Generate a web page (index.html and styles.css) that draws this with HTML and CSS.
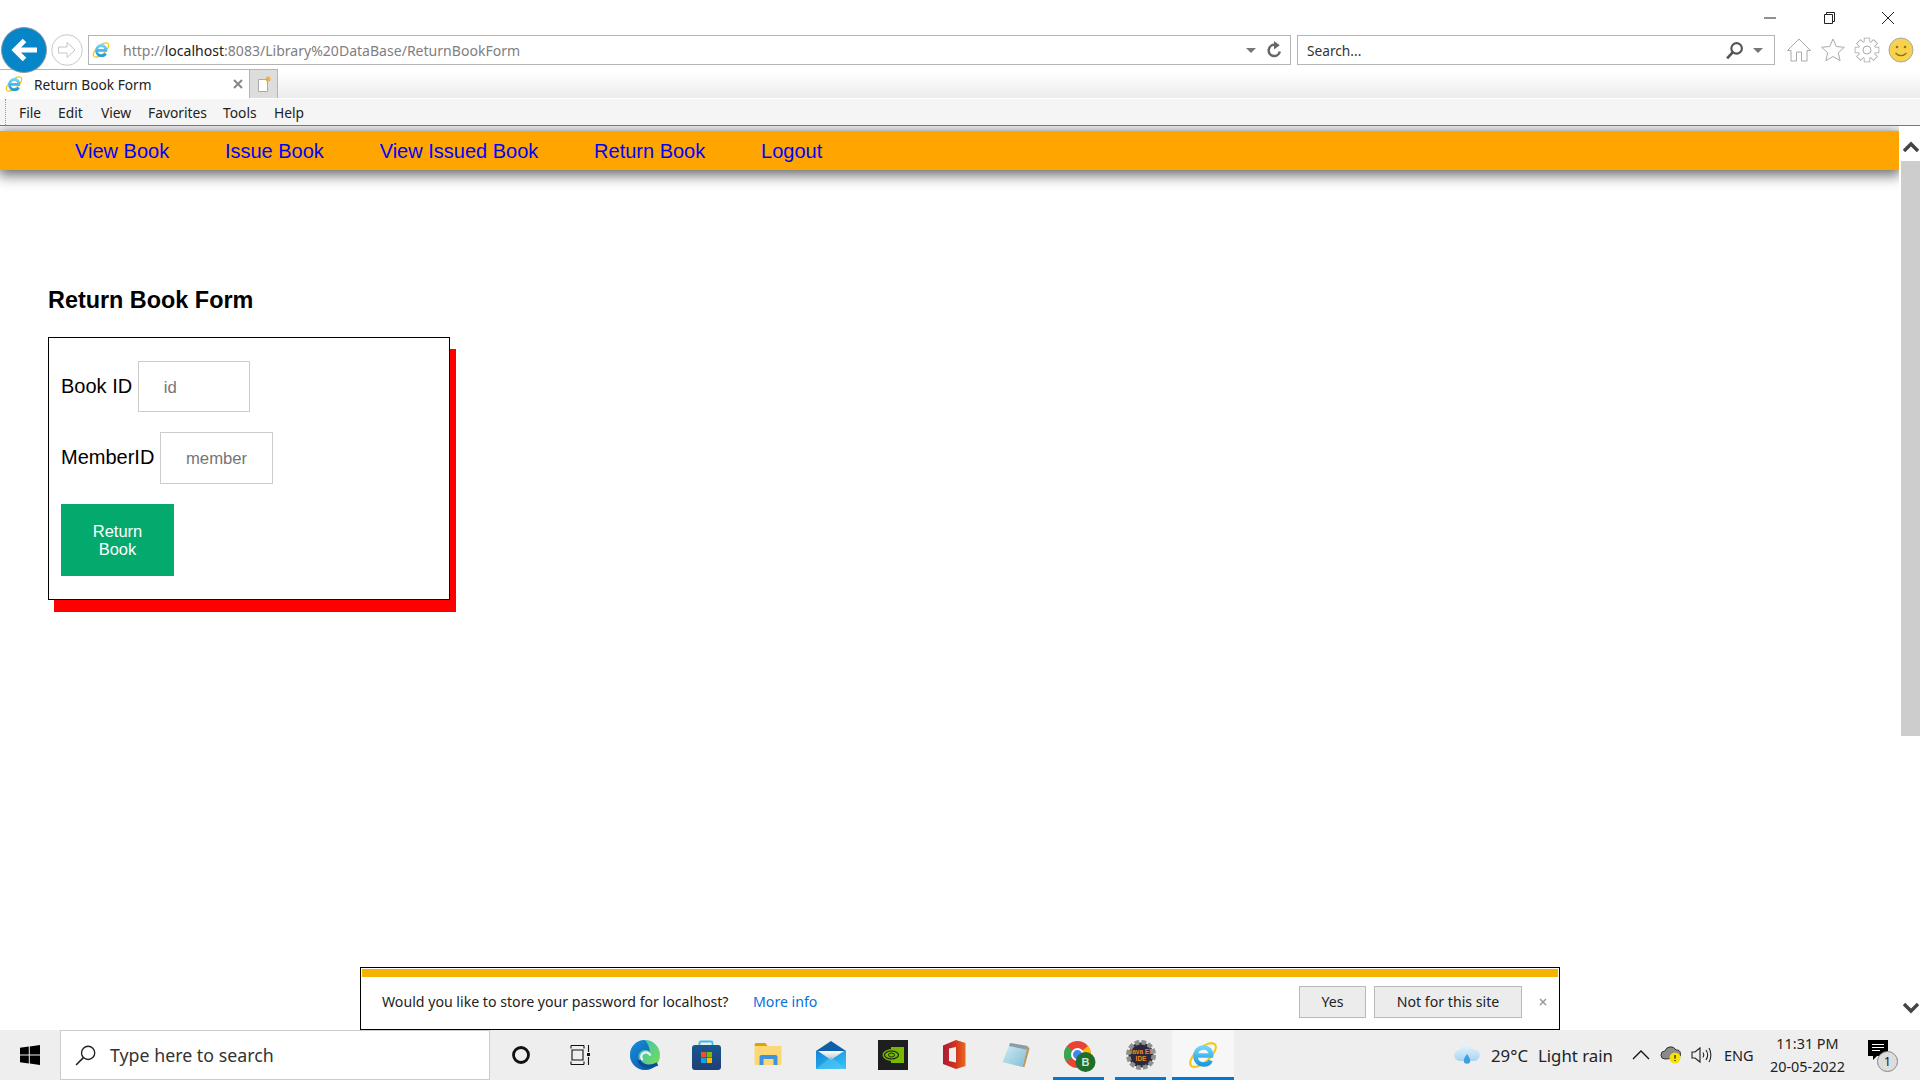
FILE: index.html
```html
<!DOCTYPE html>
<html lang="en">
<head>
<meta charset="utf-8">
<title>Return Book Form</title>
<link rel="stylesheet" href="styles.css">
</head>
<body>
<svg class="defs" width="0" height="0" aria-hidden="true">
  <defs>
    <linearGradient id="ieBlue" x1="0" y1="0" x2="0" y2="1"><stop offset="0" stop-color="#6fd3f7"/><stop offset="1" stop-color="#1d9be0"/></linearGradient>
    <linearGradient id="edgeTop" x1="0" y1="0" x2="1" y2="0.7"><stop offset="0" stop-color="#2cb8d8"/><stop offset="1" stop-color="#74dc5c"/></linearGradient>
    <linearGradient id="edgeLow" x1="0" y1="0" x2="1" y2="1"><stop offset="0" stop-color="#1a8fe0"/><stop offset="1" stop-color="#0b4f9c"/></linearGradient>
    <linearGradient id="mailG" x1="0" y1="0" x2="1" y2="1"><stop offset="0" stop-color="#0f84d8"/><stop offset="1" stop-color="#38c6f5"/></linearGradient>
    <linearGradient id="letterG" x1="0" y1="0" x2="0" y2="1"><stop offset="0" stop-color="#fff"/><stop offset="1" stop-color="#b8c0c8"/></linearGradient>
    <linearGradient id="officeG" x1="0" y1="0" x2="1" y2="0"><stop offset="0" stop-color="#a81c3a"/><stop offset=".55" stop-color="#d2321e"/><stop offset="1" stop-color="#ea6a1e"/></linearGradient>
    <linearGradient id="padG" x1="0" y1="0" x2="1" y2="1"><stop offset="0" stop-color="#d5eef5"/><stop offset="1" stop-color="#7dbcd6"/></linearGradient>
    <linearGradient id="storeG" x1="0" y1="0" x2="0" y2="1"><stop offset="0" stop-color="#18588f"/><stop offset="1" stop-color="#1f3f78"/></linearGradient>
    <linearGradient id="cloudG" x1="0" y1="0" x2="0" y2="1"><stop offset="0" stop-color="#e6f3fc"/><stop offset="1" stop-color="#a9d4f1"/></linearGradient>
    <symbol id="ie" viewBox="0 0 30 30">
      <ellipse cx="15" cy="15" rx="16" ry="7" transform="rotate(-42 15 15)" fill="none" stroke="#f6c81e" stroke-width="2.200"/>
      <path d="M8 15.500h15c.2-5-3-8-7.300-8C11 7.500 7.500 11 7.500 16c0 5 3.500 8.500 8.200 8.500 3.400 0 5.800-1.500 7-4" fill="none" stroke="url(#ieBlue)" stroke-width="4.600"/>
    </symbol>
    <g id="gearTeeth">
      <circle cx="13" cy="13" r="8.200"/>
      <rect x="10.600" y="1.500" width="4.800" height="5"/>
      <rect x="10.600" y="1.500" width="4.800" height="5" transform="rotate(45 13 13)"/>
      <rect x="10.600" y="1.500" width="4.800" height="5" transform="rotate(90 13 13)"/>
      <rect x="10.600" y="1.500" width="4.800" height="5" transform="rotate(135 13 13)"/>
      <rect x="10.600" y="1.500" width="4.800" height="5" transform="rotate(180 13 13)"/>
      <rect x="10.600" y="1.500" width="4.800" height="5" transform="rotate(225 13 13)"/>
      <rect x="10.600" y="1.500" width="4.800" height="5" transform="rotate(270 13 13)"/>
      <rect x="10.600" y="1.500" width="4.800" height="5" transform="rotate(315 13 13)"/>
    </g>
  </defs>
</svg>

<div class="window">
  <div class="titlebar">
    <svg class="winctl" viewBox="0 0 14 14"><path d="M1 7h12" stroke="#222" fill="none"/></svg>
    <svg class="winctl" viewBox="0 0 14 14"><path d="M2.500 3.500h8v9h-8zM4.500 3.500v-2h8v9h-2" stroke="#222" fill="none"/></svg>
    <svg class="winctl" viewBox="0 0 14 14"><path d="M1 1l12 12M13 1L1 13" stroke="#222" fill="none"/></svg>
  </div>

  <div class="addressrow">
    <div class="backbtn">
      <svg viewBox="0 0 46 46"><circle cx="23" cy="23" r="22.500" fill="#0785c9" stroke="#8d9aa3"/><path d="M36 23H14M23.500 13.500L14 23l9.500 9.500" fill="none" stroke="#fff" stroke-width="5"/></svg>
    </div>
    <div class="fwdbtn">
      <svg viewBox="0 0 32 32"><circle cx="16" cy="16" r="15.300" fill="#fff" stroke="#c9c9c9"/><path d="M7.500 13h8.500V8.500L24 16l-8 7.500V19H7.500z" fill="none" stroke="#c4c4c4"/></svg>
    </div>
    <div class="addressbox">
      <svg class="icon16" viewBox="0 0 30 30"><use href="#ie"/></svg>
      <span class="url">http://<b>localhost</b>:8083/Library%20DataBase/ReturnBookForm</span>
      <span class="drop"></span>
      <svg class="refresh" viewBox="0 0 18 18"><path d="M14 10a5.300 5.300 0 1 1-4.500-6.300" fill="none" stroke="#666" stroke-width="2.400"/><path d="M8.500 0l5.500 4-5.500 4z" fill="#666"/></svg>
    </div>
    <div class="searchbox">
      <span class="searchtxt">Search...</span>
      <svg class="mag" viewBox="0 0 18 18"><circle cx="11" cy="7" r="5" fill="none" stroke="#555" stroke-width="2"/><path d="M7.500 10.500L2 16.500" stroke="#555" stroke-width="2.600"/></svg>
      <span class="drop"></span>
    </div>
    <div class="tools">
      <svg viewBox="0 0 26 26"><path d="M13 2L1.500 13.500H5V24h5.500v-9h5v9H21V13.500h3.500z" fill="#fff" stroke="#aaa"/></svg>
      <svg viewBox="0 0 26 26"><path d="M13 2l3.300 7.500 8 .8-6 5.400 1.800 8L13 19.500 5.900 23.700l1.800-8-6-5.400 8-.8z" fill="#fff" stroke="#aaa"/></svg>
      <svg viewBox="0 0 26 26"><use href="#gearTeeth" fill="#aaa" stroke="#aaa" stroke-width="1.600"/><use href="#gearTeeth" fill="#fff"/><circle cx="13" cy="13" r="4" fill="none" stroke="#aaa"/></svg>
      <svg viewBox="0 0 26 26"><circle cx="13" cy="13" r="12" fill="#f8d24c" stroke="#a8a8a8"/><circle cx="9" cy="10" r="1.300" fill="#8a7420"/><circle cx="17" cy="10" r="1.300" fill="#8a7420"/><path d="M7.500 16c3 3.500 8 3.500 11 0" fill="none" stroke="#8a7420" stroke-width="1.300"/></svg>
    </div>
  </div>

  <div class="tabrow">
    <div class="tab">
      <svg class="icon16" viewBox="0 0 30 30"><use href="#ie"/></svg>
      <span class="tabtitle">Return Book Form</span>
      <svg class="tabclose" viewBox="0 0 10 10"><path d="M1 1l8 8M9 1L1 9" stroke="#888" stroke-width="2"/></svg>
    </div>
    <div class="newtab">
      <svg viewBox="0 0 14 16"><path d="M1.500 3.500h9v12h-9z" fill="#fff" stroke="#aaa"/><path d="M11 0v6M8 3h6M9 1l4 4M13 1L9 5" stroke="#f5a623"/></svg>
    </div>
  </div>

  <div class="menubar">
    <span class="grip"></span>
    <span class="menu m-file">File</span>
    <span class="menu m-edit">Edit</span>
    <span class="menu m-view">View</span>
    <span class="menu m-fav">Favorites</span>
    <span class="menu m-tools">Tools</span>
    <span class="menu m-help">Help</span>
  </div>

  <div class="viewport">
    <main class="page">
      <nav class="nav">
        <a class="navlink" href="#">View Book</a>
        <a class="navlink" href="#">Issue Book</a>
        <a class="navlink" href="#">View Issued Book</a>
        <a class="navlink" href="#">Return Book</a>
        <a class="navlink" href="#">Logout</a>
      </nav>
      <h3 class="heading">Return Book Form</h3>
      <form class="card">
        <div class="row row-first">
          <label class="lbl" for="bid">Book ID</label>
          <input class="field" id="bid" placeholder="id">
        </div>
        <div class="row">
          <label class="lbl" for="mid">MemberID</label>
          <input class="field field-m" id="mid" placeholder="member">
        </div>
        <button class="submit" type="button">Return Book</button>
      </form>
    </main>
    <aside class="scrollbar">
      <svg class="arrow" viewBox="0 0 18 12"><path d="M2 10l7-7 7 7" fill="none" stroke="#444" stroke-width="3.400"/></svg>
      <div class="track"><div class="thumb"></div></div>
      <svg class="arrow" viewBox="0 0 18 12"><path d="M2 2l7 7 7-7" fill="none" stroke="#444" stroke-width="3.400"/></svg>
    </aside>
    <div class="infobar">
      <div class="stripe"></div>
      <div class="infobody">
        <span class="infotext">Would you like to store your password for localhost?</span>
        <a class="infolink" href="#">More info</a>
        <span class="infobtn btn-yes">Yes</span>
        <span class="infobtn btn-no">Not for this site</span>
        <svg class="infoclose" viewBox="0 0 10 10"><path d="M2 2l6 6M8 2L2 8" stroke="#999" stroke-width="1.500"/></svg>
      </div>
    </div>
  </div>

  <footer class="taskbar">
    <div class="startbtn">
      <svg viewBox="0 0 20 20"><path d="M0 2.800l8.800-1.200v7.900H0zM9.800 1.400L20 0v9.500H9.800zM0 10.500h8.800v7.900L0 17.200zM9.800 10.500H20V20L9.800 18.600z" fill="#000"/></svg>
    </div>
    <div class="tasksearch">
      <svg viewBox="0 0 20 20"><circle cx="12.500" cy="7.500" r="6.300" fill="none" stroke="#222" stroke-width="1.300"/><path d="M8 12L1 19" stroke="#222" stroke-width="1.500"/></svg>
      <span class="tasksearchtxt">Type here to search</span>
    </div>
    <div class="taskbtn"><svg viewBox="0 0 30 30"><circle cx="15" cy="15" r="7.500" fill="none" stroke="#111" stroke-width="2.800"/></svg></div>
    <div class="taskbtn"><svg viewBox="0 0 30 30"><g transform="translate(2 5)"><path d="M1 .5h13M1 19.500h13M2 5h11v10H2zM1 .5v3M14 .5v3M1 16.500v3M14 16.500v3" fill="none" stroke="#111" stroke-width="1.100"/><path d="M18.500 0v7M18.500 12v8" stroke="#111" stroke-width="1.100"/><rect x="17" y="8" width="3" height="3" fill="#111"/></g></svg></div>
    <div class="taskbtn"><svg viewBox="0 0 30 30"><circle cx="15" cy="15" r="15" fill="url(#edgeTop)"/><path d="M14 0C6 .5 0 7 0 15c0 8 6.500 15 15 15 5 0 9-2 12-5.500-4 2-9 2-13 0-4-2-6-5-5.500-9 .5-3 3-5.500 6.500-5.500 2 0 4 .5 5 2C19 6 17 1 14 0z" fill="url(#edgeLow)"/><path d="M9 20c2 6.500 11 8 18.500 4" fill="none" stroke="#0b4f9c" stroke-width="3.600"/><path d="M20.500 15.500c-1.500-3-4.500-3.800-7-2.500-2.800 1.500-3 5-.8 7" fill="none" stroke="#e6f2f4" stroke-width="2.400"/></svg></div>
    <div class="taskbtn"><svg viewBox="0 0 30 30"><path d="M7.500 6V3a1.500 1.500 0 0 1 1.500-1.500h10A1.500 1.500 0 0 1 20.500 3v3" fill="none" stroke="#38bdf0" stroke-width="1.800"/><rect x="0" y="5" width="29" height="25" rx="3" fill="url(#storeG)"/><rect x="9" y="12" width="5.200" height="5.200" fill="#f25022"/><rect x="14.800" y="12" width="5.200" height="5.200" fill="#7fba00"/><rect x="9" y="17.800" width="5.200" height="5.200" fill="#00a4ef"/><rect x="14.800" y="17.800" width="5.200" height="5.200" fill="#ffb900"/></svg></div>
    <div class="taskbtn"><svg viewBox="0 0 30 30"><path d="M.5 5a2 2 0 0 1 2-2h9l2 3H.5z" fill="#dfa106"/><rect x=".5" y="6" width="27" height="19" rx="1" fill="#fcd874"/><path d="M5.500 25v-8a2 2 0 0 1 2-2h14a2 2 0 0 1 2 2v8h-4v-6h-10v6z" fill="#3d93dc"/></svg></div>
    <div class="taskbtn"><svg viewBox="0 0 30 30"><path d="M0 11h30v18H0z" fill="url(#mailG)"/><path d="M0 11L15 1l15 10z" fill="#0f5ea8"/><path d="M2 11h26L15 20z" fill="url(#letterG)"/><path d="M0 29l15-12 15 12z" fill="#55c8f4" opacity=".55"/></svg></div>
    <div class="taskbtn"><svg viewBox="0 0 30 30"><rect width="30" height="30" fill="#1e1e1e"/><path d="M13 7h13v16H13z" fill="#76b900"/><ellipse cx="14" cy="15" rx="9.500" ry="6" fill="#76b900"/><ellipse cx="13.500" cy="15" rx="7" ry="4" fill="none" stroke="#1e1e1e" stroke-width="1.200"/><ellipse cx="13.500" cy="15" rx="3" ry="2" fill="none" stroke="#1e1e1e" stroke-width="1"/></svg></div>
    <div class="taskbtn"><svg viewBox="0 0 30 30"><path d="M3 5.500L16 0l9.500 3v23L16 29 3 24zM9 8.500V21l7 1.500V7z" fill="url(#officeG)" fill-rule="evenodd"/></svg></div>
    <div class="taskbtn"><svg viewBox="0 0 30 30"><path d="M8 3l17.500 3-5 21L.5 22z" fill="url(#padG)"/><path d="M25.500 6l2 2.500-5 18.500h-2z" fill="#b89a62"/><path d="M8 3l17.500 3-.9 3.500L7 6z" fill="#8e9aa4"/></svg></div>
    <div class="taskbtn"><svg viewBox="0 0 30 30"><circle cx="13.500" cy="14.500" r="13.500" fill="#ea4335"/><path d="M13.500 14.500L2 21.500A13.500 13.500 0 0 1 3 6z" fill="#34a853"/><path d="M13.500 14.500L24 6a13.500 13.500 0 0 1 2.500 12z" fill="#fbbc05"/><circle cx="13.500" cy="14.500" r="5.500" fill="#4285f4" stroke="#fff" stroke-width="2"/><circle cx="21.500" cy="22" r="10" fill="#1e6e2e"/><text class="chromeb" x="21.500" y="26">B</text></svg></div>
    <div class="taskbtn"><svg viewBox="0 0 30 30"><circle cx="15" cy="15" r="12.500" fill="#2d2d40" stroke="#8f8f8f" stroke-width="5" stroke-dasharray="4.500 2.050"/><circle cx="15" cy="15" r="10.500" fill="#2a2a3e"/><text class="javat" x="15" y="14">Java EE</text><text class="javat" x="15" y="21">IDE</text></svg></div>
    <div class="taskbtn taskbtn-active"><svg viewBox="0 0 30 30"><use href="#ie"/></svg></div>

    <div class="tray">
      <svg class="tr-weather" viewBox="0 0 26 22"><path d="M6 17a5.500 5.500 0 0 1-.5-11 7.500 7.500 0 0 1 14-1A6 6 0 0 1 20 17z" fill="url(#cloudG)"/><path d="M13 10c2 3 3.200 4.500 3.200 6.500a3.200 3.200 0 0 1-6.400 0c0-2 1.200-3.500 3.200-6.500z" fill="#3aa0e0"/></svg>
      <span class="tr-temp">29°C</span>
      <span class="tr-cond">Light rain</span>
      <svg class="tr-chev" viewBox="0 0 18 10"><path d="M1 9l8-8 8 8" fill="none" stroke="#111" stroke-width="1.300"/></svg>
      <svg class="tr-cloud" viewBox="0 0 20 18"><path d="M4 13a4 4 0 0 1 0-8 6 6 0 0 1 11-1 4 4 0 0 1 1 8z" fill="#8b8b8b" stroke="#333"/><circle cx="14" cy="12" r="5.500" fill="#f7e200"/><path d="M14 9v3.500M14 14v1" stroke="#222" stroke-width="1.300"/></svg>
      <svg class="tr-vol" viewBox="0 0 20 20"><path d="M1 7h3l5-4v14l-5-4H1z" fill="none" stroke="#222" stroke-width="1.100"/><path d="M12 7.500c1 1.500 1 3.500 0 5M15 5c2 3 2 7 0 10M18 3c2.500 4 2.500 10 0 14" fill="none" stroke="#222" stroke-width="1.100"/></svg>
      <span class="tr-lang">ENG</span>
      <div class="tr-clock"><span>11:31 PM</span><span>20-05-2022</span></div>
      <div class="tr-notif">
        <svg viewBox="0 0 22 22"><path d="M1 1h20v16H10l-4 4v-4H1z" fill="#000"/><path d="M5 5.500h12M5 8.500h12M5 11.500h8" stroke="#fff"/></svg>
        <span class="tr-badge">1</span>
      </div>
    </div>
  </footer>
</div>
</body>
</html>
```

FILE: styles.css
```css
* { box-sizing: border-box; }
html, body { margin: 0; height: 100%; overflow: hidden; background: #fff; }
body { font-family: "Noto Sans", "Liberation Sans", sans-serif; color: #111; }
.defs { position: absolute; }
svg { display: block; flex: none; overflow: visible; }

.window { height: 1080px; width: 1920px; display: flex; flex-direction: column; }

/* window title bar */
.titlebar { height: 35px; display: flex; justify-content: flex-end; align-items: center; padding-right: 25px; gap: 45px; }
.winctl { width: 14px; height: 14px; }

/* address row */
.addressrow { height: 34px; padding-bottom: 4px; display: flex; align-items: center; position: relative; z-index: 2; }
.backbtn { width: 46px; height: 46px; margin-left: 1px; position: relative; z-index: 3; }
.backbtn svg { width: 46px; height: 46px; }
.fwdbtn { margin-left: 4px; width: 32px; height: 32px; }
.fwdbtn svg { width: 32px; height: 32px; }
.addressbox { margin-left: 5px; width: 1203px; height: 30px; border: 1px solid #b5b5b5; display: flex; align-items: center; padding-left: 3px; }
.icon16 { width: 18px; height: 18px; }
.url { margin-left: 13px; font-size: 14.050px; color: #808080; white-space: nowrap; }
.url b { font-weight: 400; color: #222; }
.drop { width: 0; height: 0; border-left: 5px solid transparent; border-right: 5px solid transparent; border-top: 5px solid #777; flex: none; }
.addressbox .drop { margin-left: auto; margin-right: 9px; }
.refresh { width: 19px; height: 21px; margin-right: 6px; }
.searchbox { margin-left: 6px; width: 478px; height: 30px; border: 1px solid #b5b5b5; display: flex; align-items: center; padding-left: 9px; }
.searchtxt { font-size: 13.700px; color: #333; }
.mag { width: 19px; height: 19px; margin-left: auto; }
.searchbox .drop { margin: 0 11px 0 9px; }
.tools { display: flex; gap: 8px; margin-left: 11px; }
.tools svg { width: 26px; height: 26px; }

/* tabs */
.tabrow { height: 29px; display: flex; background: linear-gradient(#fff 10%, #ececec); }
.tab { width: 250px; background: #fff; border: 1px solid #b5b5b5; border-bottom: 0; border-left: 0; display: flex; align-items: center; padding-left: 5px; }
.tabtitle { margin-left: 11px; font-size: 13.700px; color: #222; }
.tabclose { width: 10px; height: 10px; margin-left: auto; margin-right: 6px; }
.newtab { width: 28px; background: #ddd; border: 1px solid #b5b5b5; border-left: 0; border-bottom: 0; display: flex; align-items: center; justify-content: center; }
.newtab svg { width: 14px; height: 16px; }

/* menu */
.menubar { height: 28px; background: #f5f5f5; border-top: 1px solid #fff; border-bottom: 1px solid #777; display: flex; align-items: center; padding-left: 5px; }
.grip { width: 0; height: 26px; border-left: 1px dotted #999; margin-right: 13px; }
.menu { font-size: 13.800px; color: #222; white-space: nowrap; }
.m-file { width: 39px; }
.m-edit { width: 43px; }
.m-view { width: 47px; }
.m-fav { width: 75px; }
.m-tools { width: 51px; }

/* page */
.viewport { flex: 1; min-height: 0; display: flex; position: relative; }
.page { flex: 1; min-width: 0; padding-top: 5px; font-family: "Liberation Sans", Arial, sans-serif; color: #000; overflow: hidden; }
.nav { height: 39px; padding: 2px 0 0 47px; background: #ffa500; box-shadow: 0 3px 13px 2px rgba(0,0,0,.6); display: flex; align-items: center; position: relative; }
.navlink { padding: 0 27.900px; font-size: 20px; color: #0000ff; text-decoration: none; white-space: nowrap; }
.navlink:first-child { padding-left: 28px; }
.heading { margin: 117px 0 23px 48px; font-size: 23.400px; line-height: 27px; font-weight: 700; }
.card { margin-left: 48px; width: 402px; height: 263px; border: 1px solid #000; box-shadow: 6px 12px 0 #f00; padding: 23px 12px 22px; display: flex; flex-direction: column; align-items: flex-start; gap: 20px; background: #fff; }
.row { display: flex; align-items: center; gap: 5.600px; }
.lbl { font-size: 20px; position: relative; top: -1px; }
.row-first .lbl { top: 0; }
.field { width: 112px; height: 51px; border: 1.500px solid #ccc; padding: 2px 25px 0; font: 16.700px "Liberation Sans", Arial, sans-serif; background: #fff; outline: 0; border-radius: 0; }
.field-m { width: 113px; height: 52px; }
.field::placeholder { color: #757575; opacity: 1; }
.submit { width: 113px; height: 72px; border: 0; background: #04aa6d; color: #fff; font: 16.500px/18px "Liberation Sans", Arial, sans-serif; padding: 0 20px; }

/* scrollbar */
.scrollbar { width: 21px; background: #fff; display: flex; flex-direction: column; align-items: center; position: relative; z-index: 1; padding: 15px 0 16px 2px; }
.arrow { width: 18px; height: 12px; flex: none; }
.track { flex: 1; width: 100%; padding-top: 8px; }
.thumb { height: 575px; background: #cdcdcd; }

/* information bar */
.infobar { position: absolute; left: 360px; bottom: 0; width: 1200px; height: 63px; background: #fff; border: 1.500px solid #000; padding: 1px; display: flex; flex-direction: column; z-index: 2; }
.stripe { height: 8px; background: #f3b300; flex: none; }
.infobody { flex: 1; display: flex; align-items: center; padding: 0 0 2px 20px; font-size: 14.150px; color: #222; }
.infotext { width: 371px; white-space: nowrap; }
.infolink { color: #0a6fd8; text-decoration: none; white-space: nowrap; }
.infobtn { height: 32px; background: #ececec; border: 1px solid #b9b9b9; display: flex; align-items: center; justify-content: center; white-space: nowrap; }
.btn-yes { width: 67px; margin-left: auto; }
.btn-no { width: 148px; margin-left: 8px; }
.infoclose { width: 10px; height: 10px; margin: 0 10px 0 16px; }

/* taskbar */
.taskbar { height: 50px; background: #eee; display: flex; align-items: stretch; flex: none; }
.startbtn { width: 60px; display: flex; align-items: center; justify-content: center; }
.startbtn svg { width: 20px; height: 20px; }
.tasksearch { width: 429.500px; background: #fff; border: 1px solid #ccc; display: flex; align-items: center; padding-left: 14px; }
.tasksearch svg { width: 21px; height: 21px; }
.tasksearchtxt { margin-left: 14px; font-size: 17.800px; color: #333; white-space: nowrap; }
.taskbtn { width: 62px; display: flex; align-items: center; justify-content: center; position: relative; }
.taskbtn svg { width: 30px; height: 30px; }
.taskbtn:nth-of-type(n+12)::after { content: ""; position: absolute; left: 5px; right: 6px; bottom: 0; height: 3px; background: #0078d7; }
.taskbtn-active { background: #f7f7f7; }
.taskbtn-active::after { left: 0 !important; right: 0 !important; }
.chromeb { font: 700 11px "Liberation Sans", sans-serif; fill: #cfe8d0; text-anchor: middle; }
.javat { font: 700 6.500px "Liberation Sans", sans-serif; fill: #f08a1d; text-anchor: middle; }

.tray { margin-left: auto; display: flex; align-items: center; padding-right: 25px; font-size: 16.800px; color: #222; }
.tr-weather { width: 26px; height: 22px; }
.tr-temp { margin-left: 11px; width: 36px; white-space: nowrap; }
.tr-cond { margin-left: 11px; width: 74px; white-space: nowrap; }
.tr-chev { margin-left: 20px; width: 18px; height: 10px; }
.tr-cloud { margin-left: 11px; width: 20px; height: 18px; }
.tr-vol { margin-left: 10px; width: 20px; height: 20px; }
.tr-lang { margin-left: 13px; width: 29px; font-size: 14.500px; white-space: nowrap; }
.tr-clock { margin-left: 16px; width: 77px; display: flex; flex-direction: column; align-items: center; font-size: 14.400px; line-height: 23px; white-space: nowrap; }
.tr-notif { margin-left: 21px; width: 28px; height: 34px; position: relative; }
.tr-notif svg { width: 22px; height: 22px; margin-top: 1px; }
.tr-badge { position: absolute; left: 10px; top: 13px; width: 21px; height: 21px; border-radius: 50%; background: #ddd; border: 1px solid #888; font-size: 12px; display: flex; align-items: center; justify-content: center; color: #111; }
```
